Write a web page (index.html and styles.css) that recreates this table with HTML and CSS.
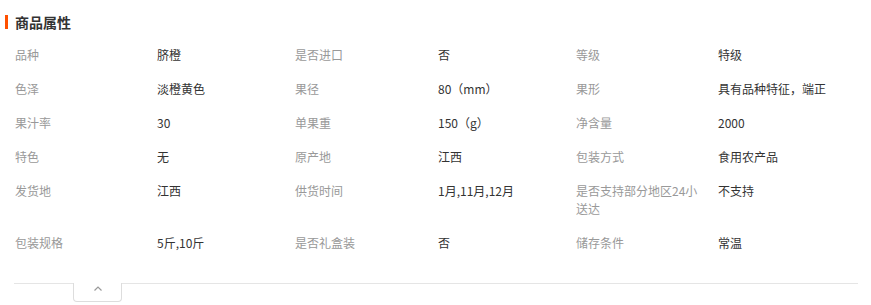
FILE: index.html
```html
<!DOCTYPE html>
<html lang="zh-CN">
<head>
<meta charset="utf-8">
<title>商品属性</title>
<link rel="stylesheet" href="styles.css">
</head>
<body>
<div class="section">
  <h2 class="title">商品属性</h2>
  <div class="attrs">
    <div class="label">品种</div><div class="value">脐橙</div>
    <div class="label">是否进口</div><div class="value">否</div>
    <div class="label">等级</div><div class="value">特级</div>

    <div class="label">色泽</div><div class="value">淡橙黄色</div>
    <div class="label">果径</div><div class="value">80（mm）</div>
    <div class="label">果形</div><div class="value">具有品种特征，端正</div>

    <div class="label">果汁率</div><div class="value">30</div>
    <div class="label">单果重</div><div class="value">150（g）</div>
    <div class="label">净含量</div><div class="value">2000</div>

    <div class="label">特色</div><div class="value">无</div>
    <div class="label">原产地</div><div class="value">江西</div>
    <div class="label">包装方式</div><div class="value">食用农产品</div>

    <div class="label">发货地</div><div class="value">江西</div>
    <div class="label">供货时间</div><div class="value">1月,11月,12月</div>
    <div class="label">是否支持部分地区24小送达</div><div class="value">不支持</div>

    <div class="label">包装规格</div><div class="value">5斤,10斤</div>
    <div class="label">是否礼盒装</div><div class="value">否</div>
    <div class="label">储存条件</div><div class="value">常温</div>
  </div>
  <div class="divider"></div>
  <div class="toggle">
    <svg width="8" height="5" viewBox="0 0 8 5" aria-hidden="true"><polyline points="0.5,4.5 4,1 7.5,4.5" fill="none" stroke="#999" stroke-width="1.2"/></svg>
  </div>
</div>
</body>
</html>
```

FILE: styles.css
```css
html, body {
  margin: 0;
  padding: 0;
  background: #fff;
}

body {
  font-family: "Noto Sans CJK SC", "Microsoft YaHei", sans-serif;
  font-size: 12px;
  color: #333;
}

.section {
  padding: 15px 13px 0 14px;
  width: 844px;
}

.title {
  margin: 0 0 0 -9px;
  padding-left: 7px;
  border-left: 3px solid #ff5000;
  font-size: 14px;
  font-weight: bold;
  line-height: 14px;
  height: 14px;
  color: #333;
}

.attrs {
  display: grid;
  grid-template-columns: 142px 138px 143px 138px 142px 1fr;
  margin-top: 9px;
  margin-left: 1px;
  padding-bottom: 23px;
}

.label,
.value {
  padding: 8px 12px 8px 0;
  line-height: 18px;
}

.label {
  color: #999;
}

.value {
  color: #333;
}

.divider {
  height: 1px;
  background: #e5e5e5;
}

.toggle {
  margin: -1px 0 0 59px;
  width: 47px;
  height: 15px;
  border: 1px solid #ddd;
  border-top: none;
  border-radius: 0 0 4px 4px;
  background: #fff;
  display: flex;
  justify-content: center;
  padding-top: 3px;
  box-sizing: content-box;
}

.toggle svg {
  display: block;
}
```
